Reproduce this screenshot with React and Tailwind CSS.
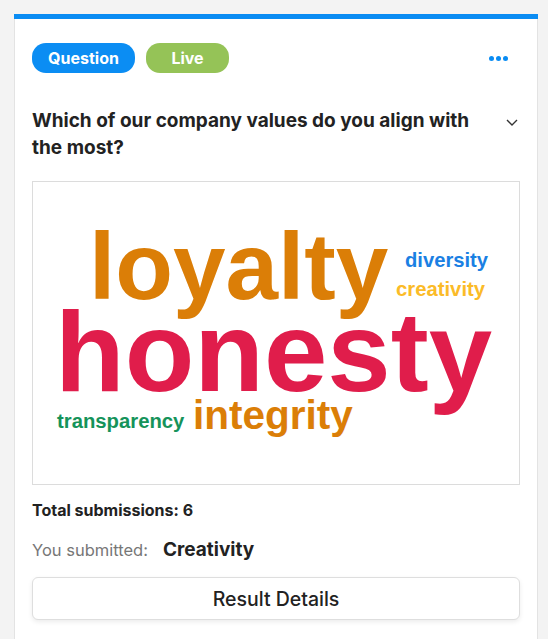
export default function App() {
  const font = { fontFamily: "Inter, 'Noto Sans', sans-serif" };
  return (
    <div className="h-[639px] w-[548px] overflow-hidden bg-[#f3f3f3] pt-[14px]" style={font}>
      <div className="ml-[14px] w-[524px] h-[640px] bg-white border-x border-[#e3e3e3] flex flex-col">
        <div className="h-[5px] bg-[#0a8cf3] -mx-px"></div>
        <div className="px-[17px]">
          <div className="mt-[24px] flex items-center">
            <span className="h-[30px] w-[103px] rounded-[14px] bg-[#0b8df3] text-white text-[16px] font-bold flex items-center justify-center">Question</span>
            <span className="ml-[11px] h-[30px] w-[83px] rounded-[14px] bg-[#95c357] text-white text-[16px] font-bold flex items-center justify-center">Live</span>
            <div className="ml-auto mr-[12px] flex gap-[2px]">
              <span className="w-[5px] h-[5px] rounded-full bg-[#0a8cf3]"></span>
              <span className="w-[5px] h-[5px] rounded-full bg-[#0a8cf3]"></span>
              <span className="w-[5px] h-[5px] rounded-full bg-[#0a8cf3]"></span>
            </div>
          </div>
          <div className="mt-[34px] flex items-start">
            <h2 className="flex-1 text-[19px] leading-[27px] font-bold text-[#222]">
              Which of our company values do you align with the most?
            </h2>
            <svg className="ml-[20px] mt-[12px] mr-[2px]" width="12" height="7" viewBox="0 0 12 7">
              <polyline points="1,1 6,6 11,1" fill="none" stroke="#333" strokeWidth="1.4" />
            </svg>
          </div>
          <div className="mt-[20px] w-[488px] h-[304px] border border-[#dcdcdc]">
            <svg width="486" height="302" viewBox="0 0 486 302" style={{ fontFamily: "'Liberation Sans', Arial, sans-serif", fontWeight: 700 }}>
              <text x="56" y="117" fontSize="94.5" fill="#db7e07">loyalty</text>
              <text x="372" y="85" fontSize="20.2" fill="#1a80e3">diversity</text>
              <text x="363" y="114" fontSize="20.3" fill="#fbbb28">creativity</text>
              <text x="22" y="209" fontSize="114" fill="#e01d4b">honesty</text>
              <text x="24" y="246" fontSize="20.3" fill="#15935a">transparency</text>
              <text x="160" y="247" fontSize="40.5" fill="#db7e07">integrity</text>
            </svg>
          </div>
          <div className="mt-[13px] text-[16px] leading-[24px] font-bold text-[#222]">Total submissions: 6</div>
          <div className="mt-[14px] flex items-baseline h-[28px]">
            <span className="text-[16.5px] text-[#777]">You submitted:</span>
            <span className="ml-[15px] text-[19px] font-bold text-[#222]">Creativity</span>
          </div>
          <button className="mt-[13px] w-[488px] h-[43px] rounded-[6px] border border-[#dedede] bg-white shadow-[0_2px_5px_rgba(0,0,0,0.08)] text-[19.5px] font-medium text-[#222] flex items-center justify-center pt-[2px]">
            Result Details
          </button>
        </div>
      </div>
    </div>
  );
}
